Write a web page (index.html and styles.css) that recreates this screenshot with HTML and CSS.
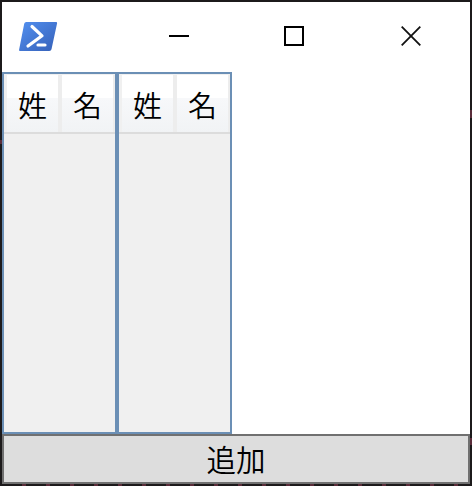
FILE: index.html
```html
<!DOCTYPE html>
<html lang="ja">
<head>
<meta charset="utf-8">
<link rel="stylesheet" href="styles.css">
</head>
<body>
<div class="window">
  <header class="titlebar">
    <svg class="logo" width="40" height="32" viewBox="0 0 40 32">
      <defs><linearGradient id="blue" x1="0" y1="0" x2="1" y2="1"><stop offset="0" stop-color="#5390f0"/><stop offset="1" stop-color="#3560b8"/></linearGradient></defs>
      <path d="M8.300 2H38Q39.400 2 39.100 3.300L33.500 29.200Q33.100 31 31.300 31H2Q.8 31 1.100 29.700L6.200 3.700Q6.600 2 8.300 2Z" fill="url(#blue)"/>
      <path d="M14 6.500L24 15.800L10 26M20 25H27" fill="none" stroke="#fff" stroke-width="3.200" stroke-linecap="round" stroke-linejoin="round"/>
    </svg>
    <svg class="control" width="20" height="22" viewBox="0 0 20 22"><path d="M0 11H20" stroke="#000" stroke-width="2"/></svg>
    <svg class="control" width="20" height="20" viewBox="0 0 20 20"><path d="M1 1H19V19H1Z" fill="none" stroke="#000" stroke-width="2"/></svg>
    <svg class="control" width="20" height="20" viewBox="0 0 20 20"><path d="M.7 .7L19.300 19.300M19.300 .7L.7 19.300" stroke="#111" stroke-width="1.800"/></svg>
  </header>
  <main class="grids">
    <section class="grid"><div class="head"><span>姓</span><span>名</span></div></section>
    <section class="grid"><div class="head"><span>姓</span><span>名</span></div></section>
  </main>
  <button class="add">追加</button>
</div>
</body>
</html>
```
FILE: styles.css
```css
* { box-sizing: border-box; }
body {
  margin: 0;
  width: 472px;
  height: 486px;
  padding: 2px;
  background:
    linear-gradient(#5a2d3a, #5a2d3a) 0 140px / 2px 4px no-repeat,
    linear-gradient(#5a2d3a, #5a2d3a) 470px 110px / 2px 8px no-repeat,
    linear-gradient(#5a2d3a, #5a2d3a) 470px 438px / 2px 7px no-repeat,
    repeating-linear-gradient(90deg, transparent 0 20px, #5a2d3a 20px 24px) 2px 484px / 468px 2px no-repeat,
    #1c1a1b;
  font-family: "Noto Sans CJK JP", sans-serif;
  font-weight: 350;
  color: #000;
  overflow: hidden;
}
.window {
  width: 468px;
  height: 482px;
  display: flex;
  flex-direction: column;
  background: #fff;
}
.titlebar {
  height: 70px;
  display: flex;
  align-items: center;
  padding: 0 49px 2px 16px;
}
.logo { margin-right: 111px; }
.control + .control { margin-left: 95px; }
.control:last-child { margin-left: 97px; }
.grids { flex: 1; display: flex; }
.grid {
  width: 115px;
  border: 2px solid #6b8fb5;
  background: #f0f0f0;
}
.head {
  height: 60px;
  display: flex;
  padding: 1px 0 0 3px;
  border-bottom: 2px solid #dcdcdc;
}
.head span {
  flex: 1;
  display: flex;
  align-items: center;
  justify-content: center;
  border-right: 4px solid #ededed;
  background: linear-gradient(#fff 40%, #f7f8fa 41%, #f1f3f5);
  font-size: 29px;
  line-height: 1;
  padding-top: 1px;
}
.head span:last-child { border-right-width: 2px; }
.add {
  height: 50px;
  margin: 0;
  padding: 0 0 1px;
  border: 2px solid #707070;
  background: #ddd;
  font: inherit;
  font-size: 29.5px;
  line-height: 1;
}
```
